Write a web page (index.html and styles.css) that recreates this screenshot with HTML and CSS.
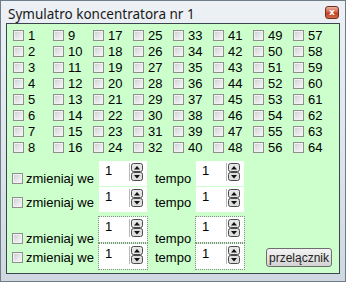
FILE: index.html
```html
<!DOCTYPE html>
<html lang="pl">
<head>
    <meta charset="UTF-8">
    <title>Symulatro koncentratora nr 1</title>
    <link rel="stylesheet" href="styles.css">
</head>
<body>
    <div class="window">
        <div class="titlebar">
            <span class="title">Symulatro koncentratora nr 1</span>
            <span class="close">x</span>
        </div>
        <div class="client">
            <div class="grid">
                <label class="item"><span class="cb"></span>1</label>
                <label class="item"><span class="cb"></span>2</label>
                <label class="item"><span class="cb"></span>3</label>
                <label class="item"><span class="cb"></span>4</label>
                <label class="item"><span class="cb"></span>5</label>
                <label class="item"><span class="cb"></span>6</label>
                <label class="item"><span class="cb"></span>7</label>
                <label class="item"><span class="cb"></span>8</label>
                <label class="item"><span class="cb"></span>9</label>
                <label class="item"><span class="cb"></span>10</label>
                <label class="item"><span class="cb"></span>11</label>
                <label class="item"><span class="cb"></span>12</label>
                <label class="item"><span class="cb"></span>13</label>
                <label class="item"><span class="cb"></span>14</label>
                <label class="item"><span class="cb"></span>15</label>
                <label class="item"><span class="cb"></span>16</label>
                <label class="item"><span class="cb"></span>17</label>
                <label class="item"><span class="cb"></span>18</label>
                <label class="item"><span class="cb"></span>19</label>
                <label class="item"><span class="cb"></span>20</label>
                <label class="item"><span class="cb"></span>21</label>
                <label class="item"><span class="cb"></span>22</label>
                <label class="item"><span class="cb"></span>23</label>
                <label class="item"><span class="cb"></span>24</label>
                <label class="item"><span class="cb"></span>25</label>
                <label class="item"><span class="cb"></span>26</label>
                <label class="item"><span class="cb"></span>27</label>
                <label class="item"><span class="cb"></span>28</label>
                <label class="item"><span class="cb"></span>29</label>
                <label class="item"><span class="cb"></span>30</label>
                <label class="item"><span class="cb"></span>31</label>
                <label class="item"><span class="cb"></span>32</label>
                <label class="item"><span class="cb"></span>33</label>
                <label class="item"><span class="cb"></span>34</label>
                <label class="item"><span class="cb"></span>35</label>
                <label class="item"><span class="cb"></span>36</label>
                <label class="item"><span class="cb"></span>37</label>
                <label class="item"><span class="cb"></span>38</label>
                <label class="item"><span class="cb"></span>39</label>
                <label class="item"><span class="cb"></span>40</label>
                <label class="item"><span class="cb"></span>41</label>
                <label class="item"><span class="cb"></span>42</label>
                <label class="item"><span class="cb"></span>43</label>
                <label class="item"><span class="cb"></span>44</label>
                <label class="item"><span class="cb"></span>45</label>
                <label class="item"><span class="cb"></span>46</label>
                <label class="item"><span class="cb"></span>47</label>
                <label class="item"><span class="cb"></span>48</label>
                <label class="item"><span class="cb"></span>49</label>
                <label class="item"><span class="cb"></span>50</label>
                <label class="item"><span class="cb"></span>51</label>
                <label class="item"><span class="cb"></span>52</label>
                <label class="item"><span class="cb"></span>53</label>
                <label class="item"><span class="cb"></span>54</label>
                <label class="item"><span class="cb"></span>55</label>
                <label class="item"><span class="cb"></span>56</label>
                <label class="item"><span class="cb"></span>57</label>
                <label class="item"><span class="cb"></span>58</label>
                <label class="item"><span class="cb"></span>59</label>
                <label class="item"><span class="cb"></span>60</label>
                <label class="item"><span class="cb"></span>61</label>
                <label class="item"><span class="cb"></span>62</label>
                <label class="item"><span class="cb"></span>63</label>
                <label class="item"><span class="cb"></span>64</label>
            </div>

            <div class="rows">
                <div class="row row-1">
                    <label class="opt"><span class="cb"></span>zmieniaj we</label>
                    <div class="spin"><span class="val">1</span><svg class="arrows" width="12" height="18" viewBox="0 0 12 18"><rect x="0.5" y="0.5" width="11" height="8" rx="2" fill="#e6e6e6" stroke="#4a4a4a"/><rect x="0.5" y="9.5" width="11" height="8" rx="2" fill="#dedede" stroke="#4a4a4a"/><path d="M3 6.5 L6 3 L9 6.5 Z" fill="#111"/><path d="M3 12 L6 15.5 L9 12 Z" fill="#111"/></svg></div>
                    <span class="tempo">tempo</span>
                    <div class="spin"><span class="val">1</span><svg class="arrows" width="12" height="18" viewBox="0 0 12 18"><rect x="0.5" y="0.5" width="11" height="8" rx="2" fill="#e6e6e6" stroke="#4a4a4a"/><rect x="0.5" y="9.5" width="11" height="8" rx="2" fill="#dedede" stroke="#4a4a4a"/><path d="M3 6.5 L6 3 L9 6.5 Z" fill="#111"/><path d="M3 12 L6 15.5 L9 12 Z" fill="#111"/></svg></div>
                </div>
                <div class="row row-2">
                    <label class="opt"><span class="cb"></span>zmieniaj we</label>
                    <div class="spin"><span class="val">1</span><svg class="arrows" width="12" height="18" viewBox="0 0 12 18"><rect x="0.5" y="0.5" width="11" height="8" rx="2" fill="#e6e6e6" stroke="#4a4a4a"/><rect x="0.5" y="9.5" width="11" height="8" rx="2" fill="#dedede" stroke="#4a4a4a"/><path d="M3 6.5 L6 3 L9 6.5 Z" fill="#111"/><path d="M3 12 L6 15.5 L9 12 Z" fill="#111"/></svg></div>
                    <span class="tempo">tempo</span>
                    <div class="spin"><span class="val">1</span><svg class="arrows" width="12" height="18" viewBox="0 0 12 18"><rect x="0.5" y="0.5" width="11" height="8" rx="2" fill="#e6e6e6" stroke="#4a4a4a"/><rect x="0.5" y="9.5" width="11" height="8" rx="2" fill="#dedede" stroke="#4a4a4a"/><path d="M3 6.5 L6 3 L9 6.5 Z" fill="#111"/><path d="M3 12 L6 15.5 L9 12 Z" fill="#111"/></svg></div>
                </div>
                <div class="row row-3">
                    <label class="opt"><span class="cb"></span>zmieniaj we</label>
                    <div class="spin dotted"><span class="val">1</span><svg class="arrows" width="12" height="18" viewBox="0 0 12 18"><rect x="0.5" y="0.5" width="11" height="8" rx="2" fill="#e6e6e6" stroke="#4a4a4a"/><rect x="0.5" y="9.5" width="11" height="8" rx="2" fill="#dedede" stroke="#4a4a4a"/><path d="M3 6.5 L6 3 L9 6.5 Z" fill="#111"/><path d="M3 12 L6 15.5 L9 12 Z" fill="#111"/></svg></div>
                    <span class="tempo">tempo</span>
                    <div class="spin dotted"><span class="val">1</span><svg class="arrows" width="12" height="18" viewBox="0 0 12 18"><rect x="0.5" y="0.5" width="11" height="8" rx="2" fill="#e6e6e6" stroke="#4a4a4a"/><rect x="0.5" y="9.5" width="11" height="8" rx="2" fill="#dedede" stroke="#4a4a4a"/><path d="M3 6.5 L6 3 L9 6.5 Z" fill="#111"/><path d="M3 12 L6 15.5 L9 12 Z" fill="#111"/></svg></div>
                </div>
                <div class="row row-4">
                    <label class="opt"><span class="cb"></span>zmieniaj we</label>
                    <div class="spin dotted"><span class="val">1</span><svg class="arrows" width="12" height="18" viewBox="0 0 12 18"><rect x="0.5" y="0.5" width="11" height="8" rx="2" fill="#e6e6e6" stroke="#4a4a4a"/><rect x="0.5" y="9.5" width="11" height="8" rx="2" fill="#dedede" stroke="#4a4a4a"/><path d="M3 6.5 L6 3 L9 6.5 Z" fill="#111"/><path d="M3 12 L6 15.5 L9 12 Z" fill="#111"/></svg></div>
                    <span class="tempo">tempo</span>
                    <div class="spin dotted"><span class="val">1</span><svg class="arrows" width="12" height="18" viewBox="0 0 12 18"><rect x="0.5" y="0.5" width="11" height="8" rx="2" fill="#e6e6e6" stroke="#4a4a4a"/><rect x="0.5" y="9.5" width="11" height="8" rx="2" fill="#dedede" stroke="#4a4a4a"/><path d="M3 6.5 L6 3 L9 6.5 Z" fill="#111"/><path d="M3 12 L6 15.5 L9 12 Z" fill="#111"/></svg></div>
                    <button class="switch">przelącznik</button>
                </div>
            </div>
        </div>
    </div>
</body>
</html>
```

FILE: styles.css
```css
body {
    margin: 0;
    font-family: "Liberation Sans", Arial, sans-serif;
    font-size: 13px;
    color: #000;
}
.window {
    width: 346px;
    height: 282px;
    box-sizing: border-box;
    border: 1px solid #6f7c89;
    padding: 0 5px 7px 5px;
    background: linear-gradient(#edf1f5, #dce3ea 60%, #cfd8e1);
    display: flex;
    flex-direction: column;
}
.titlebar {
    height: 22px;
    display: flex;
    align-items: center;
    justify-content: space-between;
}
.title {
    font-family: "Noto Sans", "Open Sans", sans-serif;
    font-size: 13.5px;
    color: #1a1a1a;
    padding-left: 2px;
    margin-top: 3px;
}
.close {
    width: 14px;
    height: 13px;
    box-sizing: border-box;
    margin-right: 1px;
    border: 1px solid #70301f;
    border-radius: 3px;
    background: linear-gradient(#eab3a2, #d2644a 45%, #c1401f 55%, #d56a48);
    color: #fff;
    font-family: "DejaVu Sans", sans-serif;
    font-size: 9px;
    font-weight: bold;
    line-height: 10px;
    text-align: center;
}
.client {
    flex: 1;
    border: 1px solid #3b4550;
    background: #ccffcc;
}
.grid {
    display: grid;
    grid-auto-flow: column;
    grid-template-rows: repeat(8, 16px);
    grid-template-columns: repeat(8, 40px);
    padding: 3px 0 0 6px;
}
.item {
    display: flex;
    align-items: center;
    gap: 4px;
}
.cb {
    width: 11px;
    height: 11px;
    box-sizing: border-box;
    border: 1px solid #8f8f8f;
    background: linear-gradient(135deg, #c9cdd2, #eeeeee 70%, #f6f6f6);
    box-shadow: inset 0 0 0 1px #f2f2f2;
    flex: none;
}
.rows {
    padding: 6px 7px 0 5px;
}
.row {
    display: flex;
    align-items: flex-start;
    height: 26px;
}
.opt {
    width: 87px;
    display: flex;
    align-items: center;
    gap: 3px;
}
.opt,
.tempo {
    margin-top: 10px;
}
.row-2 .opt,
.row-2 .tempo {
    margin-top: 8px;
}
.row-4 .opt,
.row-4 .tempo {
    margin-top: 6px;
}
.row-3 {
    margin-top: 4px;
}
.row-3 .opt,
.row-3 .tempo {
    margin-top: 14px;
}
.row-4 {
    margin-top: 1px;
}
.spin {
    width: 48px;
    height: 25px;
    box-sizing: border-box;
    background: #fff;
    display: flex;
    justify-content: space-between;
    align-items: flex-start;
    padding: 2px 4px 0 6px;
}
.dotted {
    outline: 1px dotted #8c8c8c;
}
.val {
    line-height: 16px;
}
.arrows {
    border-left: 1px solid #b8b8b8;
    padding-left: 1px;
}
.tempo {
    width: 41px;
    margin-left: 8px;
}
.switch {
    margin: 4px 0 0 auto;
    height: 19px;
    padding: 0 2px;
    border: 1px solid #6e6e6e;
    border-radius: 3px;
    background: linear-gradient(#f3f3f3, #e4e4e4 50%, #d2d2d2);
    font-family: "Liberation Sans", Arial, sans-serif;
    font-size: 12px;
    color: #222;
}
```
